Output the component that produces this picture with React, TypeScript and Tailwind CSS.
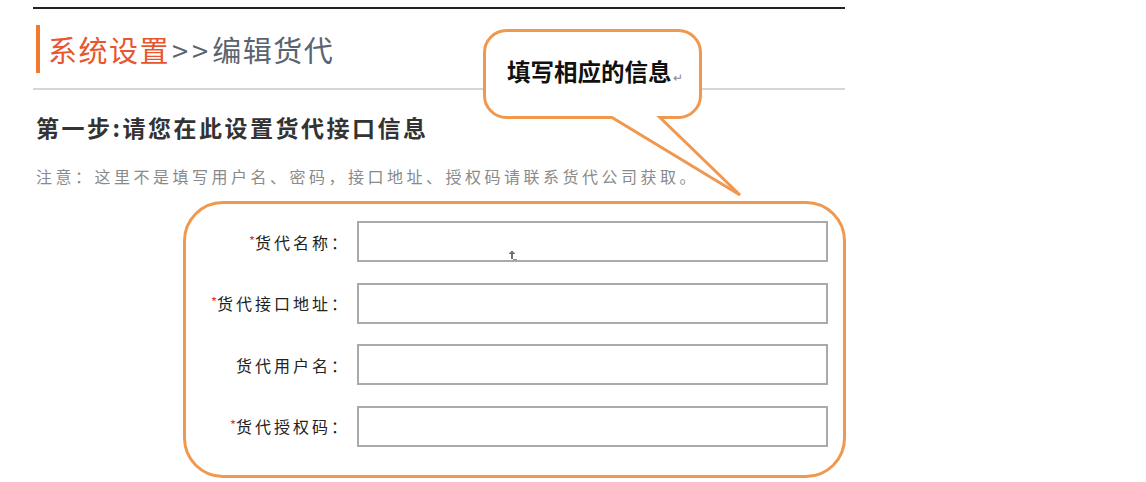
import React from "react";

const FONT = { fontFamily: '"Noto Sans CJK SC", "Noto Sans", sans-serif' };

function Row({ label, required }: { label: string; required?: boolean }) {
  return (
    <div className="flex items-center h-[41px]">
      <div className="w-[164px] shrink-0 text-right text-[16px] tracking-[3px] text-[#222] leading-none">
        {required && <span className="text-[#e8332a] text-[13px] align-top tracking-normal">*</span>}
        {label}：
      </div>
      <div className="ml-[7px] w-[471px] h-[41px] border-2 border-[#aaaaaa] bg-white" />
    </div>
  );
}

export default function App() {
  return (
    <div className="relative w-[1146px] h-[482px] bg-white overflow-hidden" style={FONT}>
      <div className="ml-[33px] w-[812px] pt-[7px]">
        <div className="h-[2px] bg-[#222]" />
        <div className="mt-[16px] ml-[3px] h-[48px] flex items-center border-l-[4px] border-[#ee7b30] pl-[8px] text-[29px] leading-none tracking-[1.5px]">
          <span className="text-[#e8552e]">系统设置</span>
          <span className="text-[#5a6470] tracking-[4px] ml-[2px]">&gt;&gt;</span>
          <span className="text-[#5a6470]">编辑货代</span>
        </div>
        <div className="mt-[15px] h-[2px] bg-[#d6d6d6]" />
        <div className="mt-[22px] ml-[3px] text-[23px] font-bold leading-[30px] tracking-[2.5px] text-[#333]">
          第一步:请您在此设置货代接口信息
        </div>
        <div className="mt-[23px] ml-[3px] text-[16px] leading-[22px] tracking-[3.5px] text-[#8a8a8a]">
          注意：这里不是填写用户名、密码，接口地址、授权码请联系货代公司获取。
        </div>
        <div className="mt-[14px] ml-[150px] w-[663px] h-[277px] border-[3px] border-[#f0984e] rounded-[40px] pt-[17px]">
          <div className="flex flex-col gap-[20.5px] relative">
            <Row label="货代名称" required />
            <Row label="货代接口地址" required />
            <Row label="货代用户名" />
            <Row label="货代授权码" required />
            <svg className="absolute left-[320px] top-[28px]" width="12" height="12" viewBox="0 0 12 12">
              <path d="M6 1.5 L2.5 5 H5 V10 H7 V5 H9.5 Z" fill="#6f6f6f" />
              <path d="M7 10.5 H11" stroke="#8a8a8a" strokeWidth="1" />
            </svg>
          </div>
        </div>
      </div>

      <svg className="absolute left-0 top-0 pointer-events-none" width="1146" height="482" viewBox="0 0 1146 482">
        <path
          d="M506.5 30.5 H678.5 A22 22 0 0 1 700.5 52.5 V95.5 A22 22 0 0 1 678.5 117.5 H660 L740 195 L612 117.5 H506.5 A22 22 0 0 1 484.5 95.5 V52.5 A22 22 0 0 1 506.5 30.5 Z"
          fill="#ffffff"
          stroke="#f0984e"
          strokeWidth="3"
          strokeLinejoin="miter"
        />
      </svg>
      <div className="absolute left-[507px] top-[60px] flex items-end text-[23.5px] font-bold leading-none text-[#111]">
        填写相应的信息
        <span className="text-[12px] font-normal text-[#888] ml-[1px] mb-[1px]">↵</span>
      </div>
    </div>
  );
}
